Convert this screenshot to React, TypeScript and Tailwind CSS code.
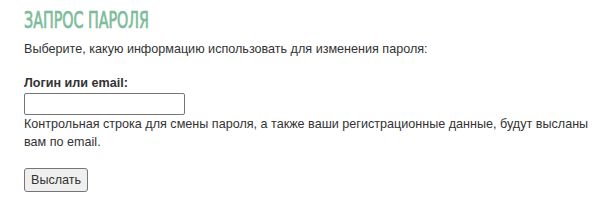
export default function App() {
  return (
    <div className="h-[200px] w-[600px] bg-white pl-6 pt-[9px] font-['Liberation_Sans',Arial,sans-serif] text-[12.6px] leading-[18px] text-[#333]">
      <h1 className="inline-block origin-left scale-x-[0.69] font-['Liberation_Sans_Narrow','DejaVu_Sans_Condensed',sans-serif] text-[23px] leading-[23px] font-normal uppercase text-[#7dbb9a] [-webkit-text-stroke:0.7px_#7dbb9a]">
        Запрос пароля
      </h1>
      <p className="mt-[7px]">Выберите, какую информацию использовать для изменения пароля:</p>
      <form className="mt-[16px]" onSubmit={(e) => e.preventDefault()}>
        <label className="block font-bold">Логин или email:</label>
        <input
          type="text"
          className="mt-[1px] block h-[22px] w-[161px] rounded-[2px] border border-[#767676] bg-white px-1"
        />
        <p className="mt-0 whitespace-nowrap">
          Контрольная строка для смены пароля, а также ваши регистрационные данные, будут высланы
          <br />
          вам по email.
        </p>
        <button
          type="submit"
          className="mt-[17px] h-[24px] rounded-[3px] border border-[#767676] bg-[#efefef] px-[6px] text-[12.6px] leading-[22px]"
        >
          Выслать
        </button>
      </form>
    </div>
  );
}
